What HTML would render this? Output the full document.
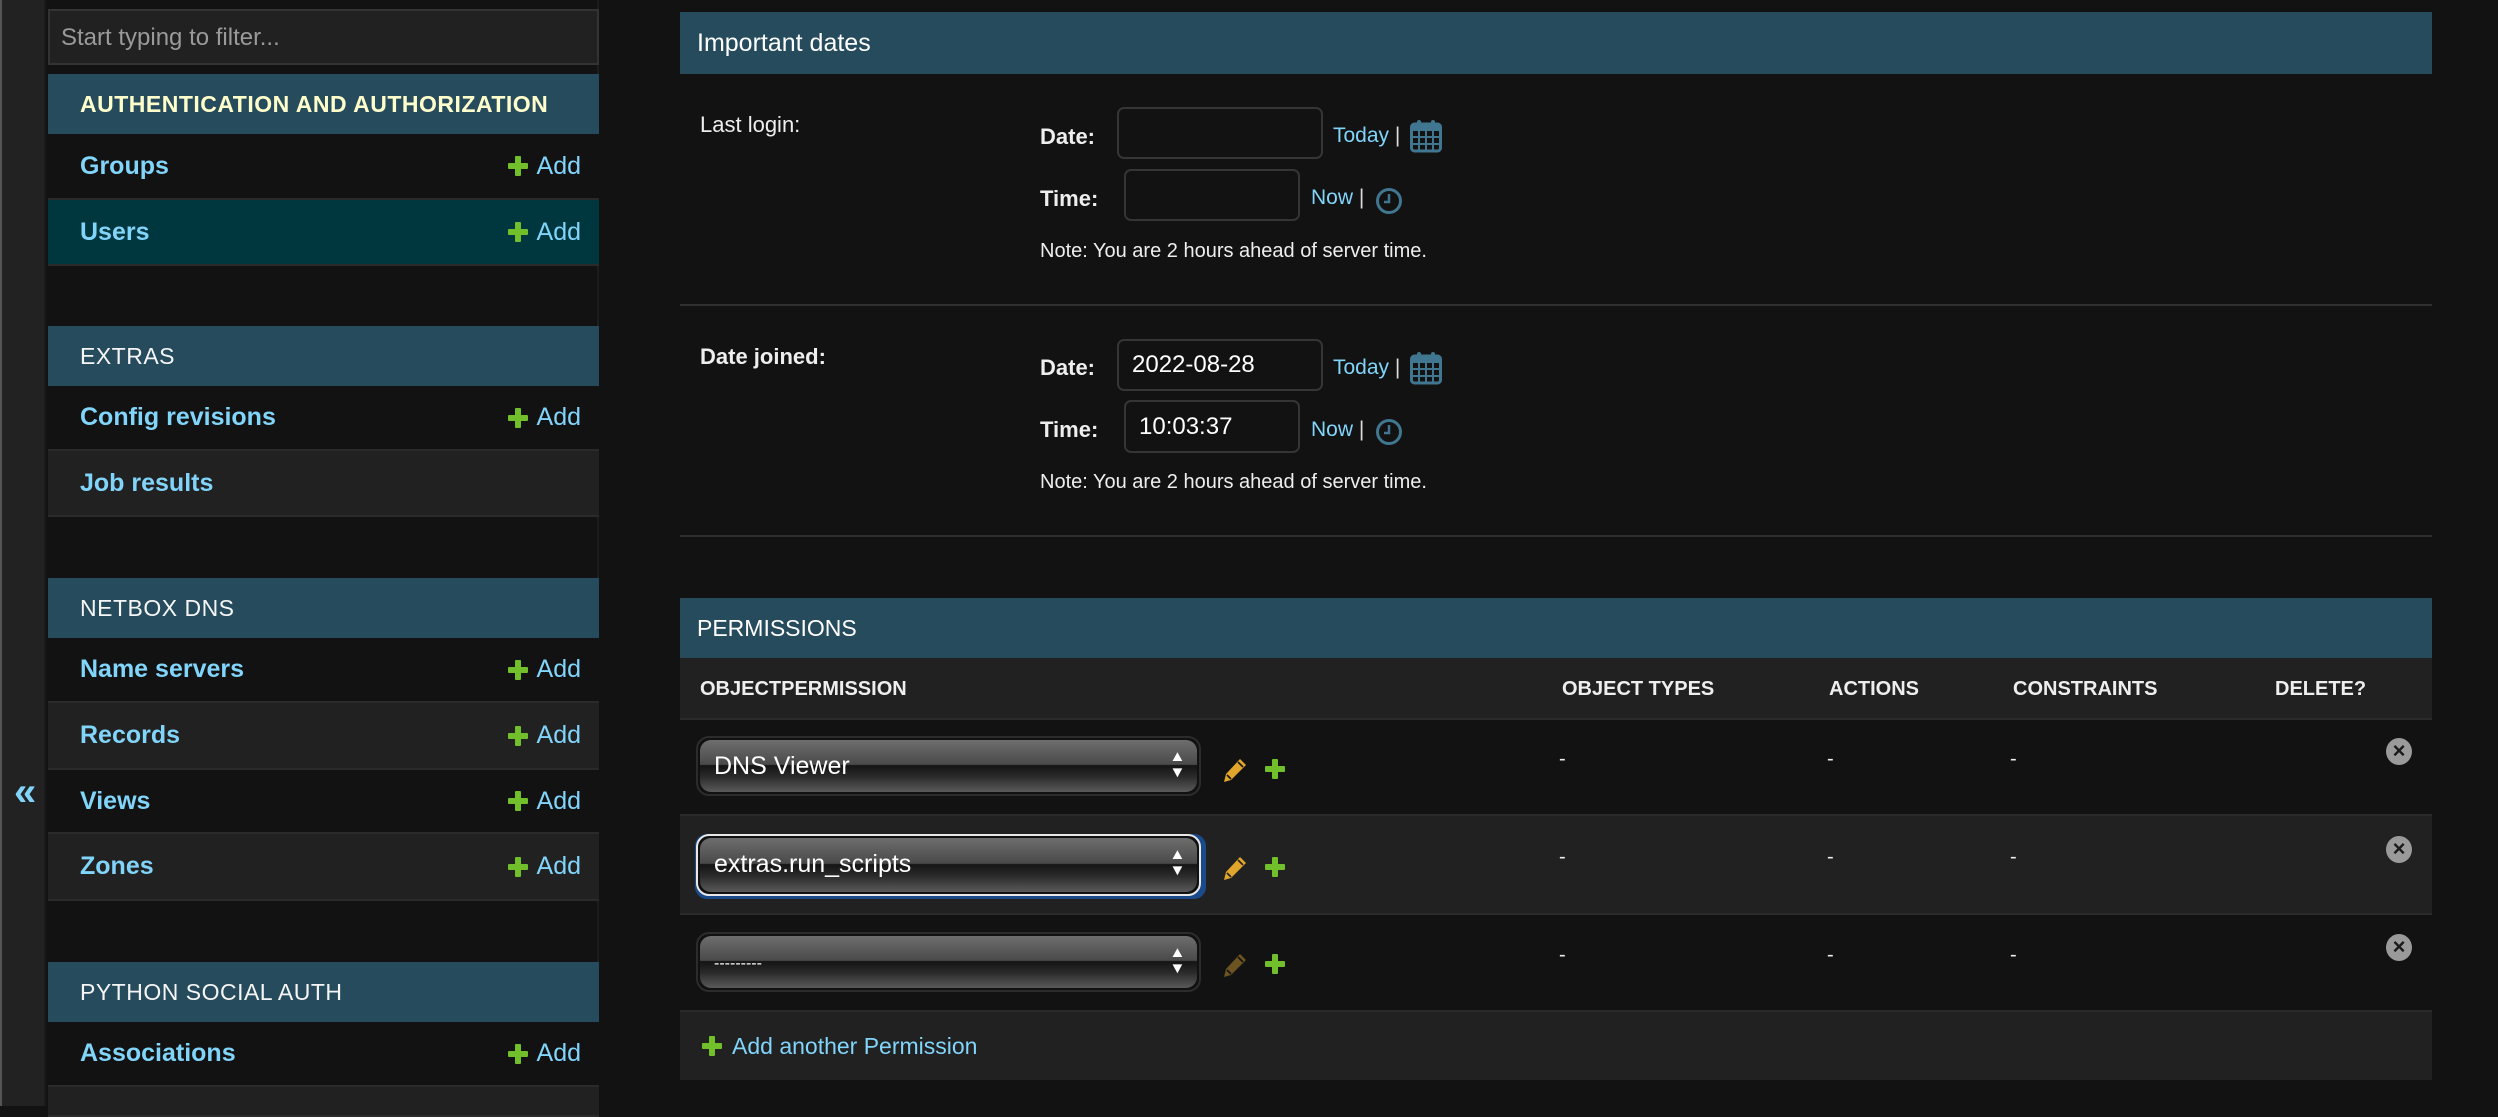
<!DOCTYPE html>
<html><head><meta charset="utf-8"><style>
*{box-sizing:border-box;margin:0;padding:0}
body{width:2498px;height:1106px;background:#121212;font-family:"Liberation Sans",Arial,sans-serif;position:relative;overflow:hidden;color:#eee}
.a{position:absolute}
.strip{left:0;top:0;width:46px;height:1106px;background:#222;border-left:2px solid #555;border-right:2px solid #1a1a1a}
.tog{left:14px;top:772px;color:#81d4fa;font-size:40px;font-weight:bold;line-height:40px}
.side{left:48px;top:0;width:551px;height:1106px;background:#121212;border-right:2px solid #1d1d1d}
.filter{left:48px;top:9px;width:551px;height:56px;background:#212121;border:2px solid #333;color:#9a9a9a;font-size:24px;padding:13px 0 0 11px}
.cap{left:48px;width:551px;height:60px;background:#264b5d;color:#f5f5f5;font-size:23px;padding-left:32px;line-height:60px;letter-spacing:0.5px}
.row{left:48px;width:551px;border-bottom:2px solid #2a2a2a;color:#81d4fa;font-weight:bold;font-size:25px;padding-left:32px;display:flex;align-items:center}
.row .add{position:absolute;right:18px;font-weight:normal;color:#81d4fa;display:flex;align-items:center}
.pl{display:inline-block;width:20px;height:20px;position:relative;margin-right:9px}
.pl:before{content:"";position:absolute;left:7px;top:0;width:6px;height:20px;background:#70bf2b;border-radius:1px}
.pl:after{content:"";position:absolute;left:0;top:7px;width:20px;height:6px;background:#70bf2b;border-radius:1px}
i.a.pl{position:absolute;margin:0}
.hdr{left:680px;width:1752px;background:#264b5d;color:#fff;font-size:25px;padding-left:17px}
.lbl{font-size:22px;color:#eee}
.b{font-weight:bold}
.inp{background:#121212;border:2px solid #353535;border-radius:7px;color:#fff;font-size:24px;padding-left:13px;display:flex;align-items:center}
.lnk{color:#81d4fa;font-size:21px}
.note{font-size:20px;color:#eee}
.hr{left:680px;width:1752px;height:2px;background:#2f2f2f}
.th{font-size:20px;font-weight:bold;color:#eee}
.sel{left:696px;width:505px;height:60px;border-radius:13px;border:2px solid #2c2c2c;background:#111;overflow:hidden}
.sel .g{position:absolute;left:2px;top:2px;right:2px;bottom:2px;border-radius:11px;background:linear-gradient(#6e6e6e 0%,#4a4a4a 47%,#141414 49%,#2a2a2a 70%,#5a5a5a 100%)}
.sel .t{position:absolute;left:16px;top:0;line-height:56px;color:#fff;font-size:25px}
.sel .ar{position:absolute;right:14px;top:11px;color:#fff;font-size:15px;line-height:16px;text-align:center;transform:scaleX(1.1)}
.dash{font-size:20px;color:#eee}
.x{width:26px;height:27px;border-radius:50%;background:#9a9a9a;color:#1a1a1a;font-weight:bold;font-size:22px;text-align:center;line-height:26px}
</style></head><body>
<div class="a strip"></div>
<div class="a tog">«</div>
<div class="a side"></div>
<div class="a filter">Start typing to filter...</div>

<div class="a cap" style="top:74px;color:#ffffcc;font-weight:bold">AUTHENTICATION AND AUTHORIZATION</div>
<div class="a row" style="top:134px;height:66px;background:#121212">Groups<span class="add"><i class="pl"></i>Add</span></div>
<div class="a row" style="top:200px;height:66px;background:#00363d">Users<span class="add"><i class="pl"></i>Add</span></div>

<div class="a cap" style="top:326px">EXTRAS</div>
<div class="a row" style="top:386px;height:65px;background:#121212">Config revisions<span class="add"><i class="pl"></i>Add</span></div>
<div class="a row" style="top:451px;height:66px;background:#212121">Job results</div>

<div class="a cap" style="top:578px">NETBOX DNS</div>
<div class="a row" style="top:638px;height:65px;background:#121212">Name servers<span class="add"><i class="pl"></i>Add</span></div>
<div class="a row" style="top:703px;height:67px;background:#212121">Records<span class="add"><i class="pl"></i>Add</span></div>
<div class="a row" style="top:770px;height:64px;background:#121212">Views<span class="add"><i class="pl"></i>Add</span></div>
<div class="a row" style="top:834px;height:67px;background:#212121">Zones<span class="add"><i class="pl"></i>Add</span></div>

<div class="a cap" style="top:962px">PYTHON SOCIAL AUTH</div>
<div class="a row" style="top:1022px;height:65px;background:#121212">Associations<span class="add"><i class="pl"></i>Add</span></div>
<div class="a row" style="top:1087px;height:30px;background:#212121"></div>

<div class="a hdr" style="top:12px;height:62px;line-height:62px">Important dates</div>

<div class="a lbl" style="left:700px;top:112px">Last login:</div>
<div class="a lbl b" style="left:1040px;top:124px">Date:</div>
<div class="a inp" style="left:1117px;top:107px;width:206px;height:52px"></div>
<div class="a lnk" style="left:1333px;top:124px">Today <span style="color:#ddd">|</span></div>
<svg class="a" style="left:1410px;top:119px" width="32" height="34" viewBox="0 0 32 34"><rect x="1.5" y="5" width="29" height="27" rx="3" fill="none" stroke="#417690" stroke-width="3"/><rect x="1.5" y="5" width="29" height="7" fill="#417690"/><rect x="7" y="1" width="4" height="8" rx="2" fill="#417690"/><rect x="21" y="1" width="4" height="8" rx="2" fill="#417690"/><path d="M2 18H30M2 25H30M9 12V31M16 12V31M23 12V31" stroke="#417690" stroke-width="2"/></svg>
<div class="a lbl b" style="left:1040px;top:186px">Time:</div>
<div class="a inp" style="left:1124px;top:169px;width:176px;height:52px"></div>
<div class="a lnk" style="left:1311px;top:186px">Now <span style="color:#ddd">|</span></div>
<svg class="a" style="left:1375px;top:187px" width="28" height="28" viewBox="0 0 28 28"><circle cx="14" cy="14" r="11.5" fill="none" stroke="#417690" stroke-width="3"/><path d="M14 7V15H9" fill="none" stroke="#417690" stroke-width="2.5"/></svg>
<div class="a note" style="left:1040px;top:240px">Note: You are 2 hours ahead of server time.</div>
<div class="a hr" style="top:304px"></div>

<div class="a lbl b" style="left:700px;top:344px">Date joined:</div>
<div class="a lbl b" style="left:1040px;top:355px">Date:</div>
<div class="a inp" style="left:1117px;top:339px;width:206px;height:52px">2022-08-28</div>
<div class="a lnk" style="left:1333px;top:356px">Today <span style="color:#ddd">|</span></div>
<svg class="a" style="left:1410px;top:351px" width="32" height="34" viewBox="0 0 32 34"><rect x="1.5" y="5" width="29" height="27" rx="3" fill="none" stroke="#417690" stroke-width="3"/><rect x="1.5" y="5" width="29" height="7" fill="#417690"/><rect x="7" y="1" width="4" height="8" rx="2" fill="#417690"/><rect x="21" y="1" width="4" height="8" rx="2" fill="#417690"/><path d="M2 18H30M2 25H30M9 12V31M16 12V31M23 12V31" stroke="#417690" stroke-width="2"/></svg>
<div class="a lbl b" style="left:1040px;top:417px">Time:</div>
<div class="a inp" style="left:1124px;top:400px;width:176px;height:53px">10:03:37</div>
<div class="a lnk" style="left:1311px;top:418px">Now <span style="color:#ddd">|</span></div>
<svg class="a" style="left:1375px;top:418px" width="28" height="28" viewBox="0 0 28 28"><circle cx="14" cy="14" r="11.5" fill="none" stroke="#417690" stroke-width="3"/><path d="M14 7V15H9" fill="none" stroke="#417690" stroke-width="2.5"/></svg>
<div class="a note" style="left:1040px;top:471px">Note: You are 2 hours ahead of server time.</div>
<div class="a hr" style="top:535px"></div>

<div class="a hdr" style="top:598px;height:60px;line-height:60px;font-size:23px">PERMISSIONS</div>
<div class="a" style="left:680px;top:658px;width:1752px;height:62px;background:#212121;border-bottom:2px solid #2a2a2a"></div>
<div class="a th" style="left:700px;top:678px">OBJECTPERMISSION</div>
<div class="a th" style="left:1562px;top:678px">OBJECT TYPES</div>
<div class="a th" style="left:1829px;top:678px">ACTIONS</div>
<div class="a th" style="left:2013px;top:678px">CONSTRAINTS</div>
<div class="a th" style="left:2275px;top:678px">DELETE?</div>

<div class="a" style="left:680px;top:720px;width:1752px;height:96px;background:#121212;border-bottom:2px solid #2a2a2a"></div>
<div class="a" style="left:680px;top:816px;width:1752px;height:99px;background:#212121;border-bottom:2px solid #2a2a2a"></div>
<div class="a" style="left:680px;top:915px;width:1752px;height:97px;background:#121212;border-bottom:2px solid #2a2a2a"></div>
<div class="a" style="left:680px;top:1012px;width:1752px;height:68px;background:#212121"></div>

<div class="a sel" style="top:736px"><div class="g"></div><div class="t">DNS Viewer</div><div class="ar">▲<br>▼</div></div>
<div class="a" style="left:695px;top:834px;width:511px;height:65px;border-radius:12px;background:#1a4a8a"></div>
<div class="a sel" style="top:834px;height:62px;border:2px solid #e8e8e8;background:#111"><div class="g"></div><div class="t">extras.run_scripts</div><div class="ar">▲<br>▼</div></div>
<div class="a sel" style="top:932px"><div class="g"></div><div class="t" style="font-size:16px;top:2px">---------</div><div class="ar">▲<br>▼</div></div>

<svg class="a" style="left:1222px;top:757px" width="26" height="26" viewBox="0 0 26 26"><path d="M18 2L24 8L9 23L2 25L4 17Z" fill="#e0a52a"/><path d="M5 18L9 22M16 5L21 10" stroke="#121212" stroke-width="1.6"/></svg>
<svg class="a" style="left:1222px;top:855px" width="26" height="26" viewBox="0 0 26 26"><path d="M18 2L24 8L9 23L2 25L4 17Z" fill="#e0a52a"/><path d="M5 18L9 22M16 5L21 10" stroke="#212121" stroke-width="1.6"/></svg>
<svg class="a" style="left:1222px;top:952px" width="26" height="26" viewBox="0 0 26 26"><path d="M18 2L24 8L9 23L2 25L4 17Z" fill="#6b5420"/><path d="M5 18L9 22M16 5L21 10" stroke="#121212" stroke-width="1.6"/></svg>
<i class="a pl" style="left:1265px;top:759px"></i>
<i class="a pl" style="left:1265px;top:857px"></i>
<i class="a pl" style="left:1265px;top:954px"></i>

<div class="a dash" style="left:1559px;top:748px">-</div><div class="a dash" style="left:1827px;top:748px">-</div><div class="a dash" style="left:2010px;top:748px">-</div>
<div class="a dash" style="left:1559px;top:846px">-</div><div class="a dash" style="left:1827px;top:846px">-</div><div class="a dash" style="left:2010px;top:846px">-</div>
<div class="a dash" style="left:1559px;top:944px">-</div><div class="a dash" style="left:1827px;top:944px">-</div><div class="a dash" style="left:2010px;top:944px">-</div>
<div class="a x" style="left:2386px;top:738px">×</div>
<div class="a x" style="left:2386px;top:836px">×</div>
<div class="a x" style="left:2386px;top:934px">×</div>

<i class="a pl" style="left:702px;top:1036px"></i>
<div class="a lnk" style="left:732px;top:1033px;font-size:23px">Add another Permission</div>
</body></html>
